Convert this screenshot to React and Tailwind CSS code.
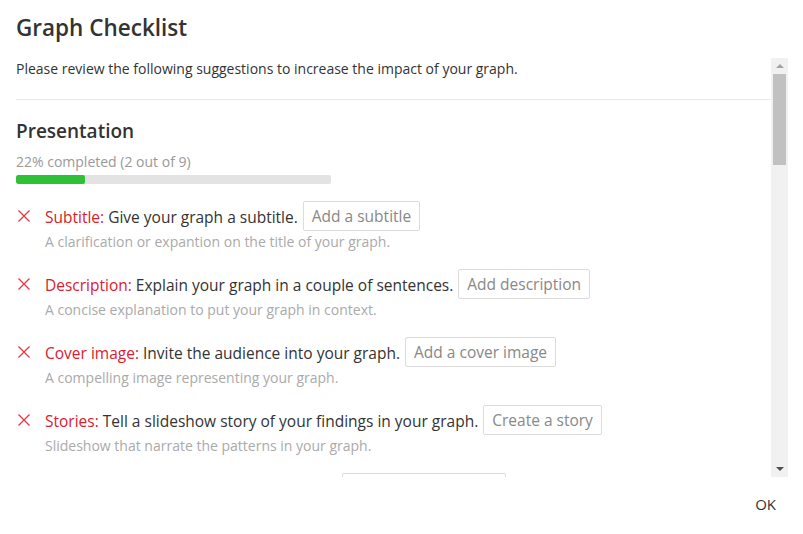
const items = [
  {
    label: "Subtitle:",
    text: "Give your graph a subtitle.",
    action: "Add a subtitle",
    hint: "A clarification or expantion on the title of your graph.",
  },
  {
    label: "Description:",
    text: "Explain your graph in a couple of sentences.",
    action: "Add description",
    hint: "A concise explanation to put your graph in context.",
  },
  {
    label: "Cover image:",
    text: "Invite the audience into your graph.",
    action: "Add a cover image",
    hint: "A compelling image representing your graph.",
  },
  {
    label: "Stories:",
    text: "Tell a slideshow story of your findings in your graph.",
    action: "Create a story",
    hint: "Slideshow that narrate the patterns in your graph.",
  },
  {
    label: "Tags:",
    text: "Help people find your graph easily.",
    action: "Add some keywords",
    hint: "Keywords that describe the topic of your graph.",
  },
];

function Cross() {
  return (
    <svg width="14" height="14" viewBox="0 0 14 14" className="shrink-0">
      <path d="M1.5 1.5 L12.5 12.5 M12.5 1.5 L1.5 12.5" stroke="#e3343f" strokeWidth="1.2" fill="none" />
    </svg>
  );
}

function Scrollbar() {
  return (
    <div className="w-[17px] shrink-0 bg-[#f1f1f1] flex flex-col items-center">
      <div className="h-[16px] flex items-center justify-center">
        <div className="w-0 h-0 border-x-[4px] border-x-transparent border-b-[4px] border-b-[#a3a3a3]" />
      </div>
      <div className="w-[13px] h-[91px] bg-[#c1c1c1]" />
      <div className="flex-1" />
      <div className="h-[16px] flex items-center justify-center">
        <div className="w-0 h-0 border-x-[4px] border-x-transparent border-t-[4px] border-t-[#505050]" />
      </div>
    </div>
  );
}

export default function App() {
  return (
    <div className="w-[803px] h-[534px] bg-white flex flex-col text-[#333] font-['Open_Sans',sans-serif]">
      <div className="px-4 pt-[13px] h-[58px]">
        <h1 className="text-[22.5px] leading-[30px] font-semibold">Graph Checklist</h1>
      </div>
      <div className="flex h-[419px] pr-[15px]">
        <div className="flex-1 overflow-hidden pl-4">
          <p className="mt-[3px] text-[14px] leading-[16px]">
            Please review the following suggestions to increase the impact of your graph.
          </p>
          <div className="mt-[22px] border-t border-[#e8e8e8]" />
          <h2 className="mt-[19px] text-[19px] leading-[24px] font-semibold">Presentation</h2>
          <p className="mt-[11px] text-[14px] leading-[16px] text-[#999]">22% completed (2 out of 9)</p>
          <div className="mt-[5px] w-[315px] h-[9px] rounded-[2px] bg-[#e3e3e3] overflow-hidden">
            <div className="w-[22%] h-full bg-[#2dc136] rounded-[2px]" />
          </div>
          <div className="mt-[17px] flex flex-col gap-[19px]">
            {items.map((item, i) => (
              <div key={i}>
                <div className="flex items-center h-[30px] text-[15.5px] leading-[22px]">
                  <div className="w-[29px] pl-[1px]">
                    <Cross />
                  </div>
                  <span className="text-[#d9202f] pt-[1px]">{item.label}</span>
                  <span className="ml-[4px] pt-[1px]">{item.text}</span>
                  <button className="ml-[5px] h-[30px] px-[8px] border border-[#dcdcdc] rounded-[2px] text-[#888] bg-white">
                    {item.action}
                  </button>
                </div>
                <p className="mt-[3px] pl-[29px] text-[14px] leading-[16px] text-[#aaa]">{item.hint}</p>
              </div>
            ))}
          </div>
        </div>
        <Scrollbar />
      </div>
      <div className="flex-1 flex items-center justify-end pr-[27px] pb-[2px]">
        <span className="text-[15px] text-[#333]">OK</span>
      </div>
    </div>
  );
}
